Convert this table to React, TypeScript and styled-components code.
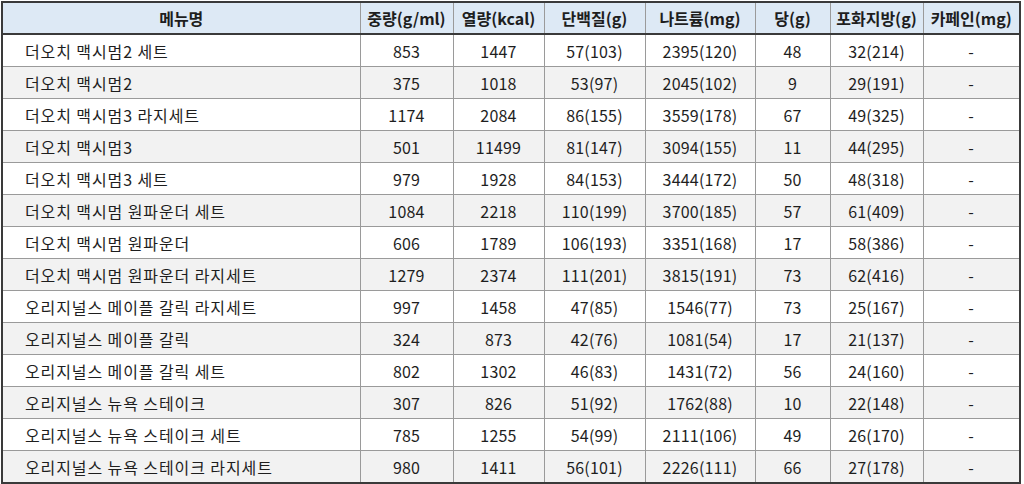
import React, { JSX } from 'react';
import styled, { createGlobalStyle } from 'styled-components';

type Row = [string, number, number, string, string, number, string, string];

const rows: Row[] = [
  ['더오치 맥시멈2 세트', 853, 1447, '57(103)', '2395(120)', 48, '32(214)', '-'],
  ['더오치 맥시멈2', 375, 1018, '53(97)', '2045(102)', 9, '29(191)', '-'],
  ['더오치 맥시멈3 라지세트', 1174, 2084, '86(155)', '3559(178)', 67, '49(325)', '-'],
  ['더오치 맥시멈3', 501, 11499, '81(147)', '3094(155)', 11, '44(295)', '-'],
  ['더오치 맥시멈3 세트', 979, 1928, '84(153)', '3444(172)', 50, '48(318)', '-'],
  ['더오치 맥시멈 원파운더 세트', 1084, 2218, '110(199)', '3700(185)', 57, '61(409)', '-'],
  ['더오치 맥시멈 원파운더', 606, 1789, '106(193)', '3351(168)', 17, '58(386)', '-'],
  ['더오치 맥시멈 원파운더 라지세트', 1279, 2374, '111(201)', '3815(191)', 73, '62(416)', '-'],
  ['오리지널스 메이플 갈릭 라지세트', 997, 1458, '47(85)', '1546(77)', 73, '25(167)', '-'],
  ['오리지널스 메이플 갈릭', 324, 873, '42(76)', '1081(54)', 17, '21(137)', '-'],
  ['오리지널스 메이플 갈릭 세트', 802, 1302, '46(83)', '1431(72)', 56, '24(160)', '-'],
  ['오리지널스 뉴욕 스테이크', 307, 826, '51(92)', '1762(88)', 10, '22(148)', '-'],
  ['오리지널스 뉴욕 스테이크 세트', 785, 1255, '54(99)', '2111(106)', 49, '26(170)', '-'],
  ['오리지널스 뉴욕 스테이크 라지세트', 980, 1411, '56(101)', '2226(111)', 66, '27(178)', '-'],
];

const columns = [
  { title: '메뉴명', width: 358 },
  { title: '중량(g/ml)', width: 93 },
  { title: '열량(kcal)', width: 91 },
  { title: '단백질(g)', width: 101 },
  { title: '나트륨(mg)', width: 110 },
  { title: '당(g)', width: 75 },
  { title: '포화지방(g)', width: 93 },
  { title: '카페인(mg)', width: 97 },
];

const GlobalStyle = createGlobalStyle`
  html, body {
    margin: 0;
    padding: 0;
    background: #ffffff;
  }
`;

const Page = styled.div`
  padding: 1px 0 0 1px;
  font-family: 'Noto Sans CJK KR', 'Noto Sans', sans-serif;
  color: #1e1e1e;
`;

const Table = styled.table`
  border-collapse: collapse;
  table-layout: fixed;
  width: 1018px;
  border: 2px solid #3a3a3a;
  font-size: 16px;
`;

const HeadCell = styled.th`
  height: 30px;
  padding: 0;
  background: #dde9f5;
  font-size: 16px;
  font-weight: 700;
  text-align: center;
  border-left: 1px solid #9a9a9a;
  border-bottom: 2px solid #3a3a3a;
  white-space: nowrap;
`;

const BodyRow = styled.tr<{ $shaded: boolean }>`
  background: ${(p) => (p.$shaded ? '#f2f2f2' : '#ffffff')};
`;

const Cell = styled.td<{ $left?: boolean }>`
  height: 31px;
  padding: ${(p) => (p.$left ? '0 0 0 22px' : '0')};
  text-align: ${(p) => (p.$left ? 'left' : 'center')};
  border-left: 1px solid #9a9a9a;
  border-top: 1px solid #9a9a9a;
  white-space: nowrap;
  letter-spacing: ${(p) => (p.$left ? '0.9px' : '0.2px')};
`;

const App = (): JSX.Element => (
  <Page>
    <GlobalStyle />
    <Table>
      <colgroup>
        {columns.map((c) => (
          <col key={c.title} style={{ width: c.width }} />
        ))}
      </colgroup>
      <thead>
        <tr>
          {columns.map((c) => (
            <HeadCell key={c.title}>{c.title}</HeadCell>
          ))}
        </tr>
      </thead>
      <tbody>
        {rows.map((row, i) => (
          <BodyRow key={row[0]} $shaded={i % 2 === 1}>
            {row.map((v, j) => (
              <Cell key={j} $left={j === 0}>
                {v}
              </Cell>
            ))}
          </BodyRow>
        ))}
      </tbody>
    </Table>
  </Page>
);

export default App;
